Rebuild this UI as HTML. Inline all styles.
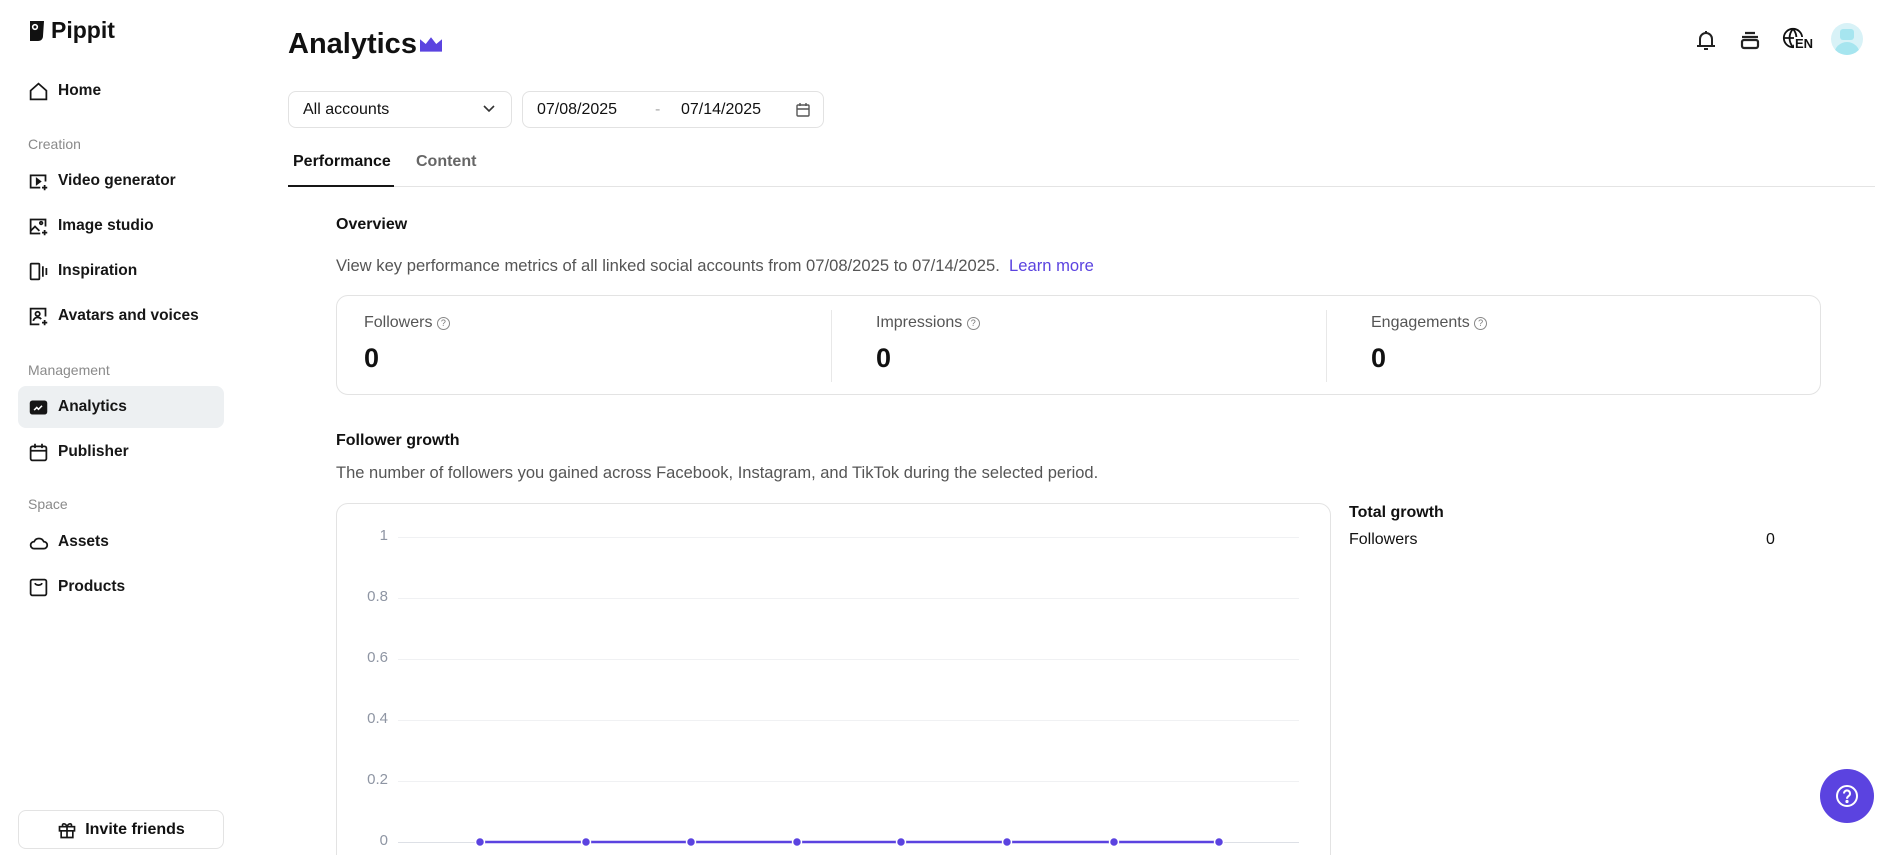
<!DOCTYPE html>
<html><head><meta charset="utf-8"><style>
*{margin:0;padding:0;box-sizing:border-box}
html,body{width:1902px;height:855px;overflow:hidden}
body{background:#fff;font-family:"Liberation Sans",Arial,sans-serif;color:#111}
#w{position:relative;width:1902px;height:855px;overflow:hidden}
.a{position:absolute;white-space:nowrap}
.nav{position:absolute;left:28px;height:24px;line-height:24px;font-size:15.5px;font-weight:bold;color:#161616;display:flex;align-items:center}
.nav svg{width:21px;height:21px;margin-right:9px}
.sec{position:absolute;left:28px;font-size:14px;color:#8a8a8a;line-height:16px}
.lbl{font-size:16px;color:#555}
.val{font-size:27px;font-weight:bold}
.yl{position:absolute;width:60px;text-align:right;left:328px;font-size:15px;color:#8e95a3;line-height:16px}
.gl{position:absolute;left:398px;width:901px;height:1px;background:#f0f1f3}
.q{border:1px solid #888;border-radius:50%;display:inline-block;width:13px;height:13px;line-height:11px;text-align:center;font-size:9px;color:#777;vertical-align:1px}
</style></head><body><div id="w">
<!-- sidebar -->
<div class="a" style="left:28px;top:17px;display:flex;align-items:center">
<svg width="18" height="24" viewBox="0 0 18 22"><path d="M2 1h14l-1 15c0 3-2 5-5 5H2z" fill="#111"/><circle cx="7" cy="7" r="2.3" fill="none" stroke="#fff" stroke-width="1.6"/></svg>
<span style="font-size:23px;font-weight:bold;margin-left:5px">Pippit</span></div>

<div class="nav" style="top:79px"><svg viewBox="0 0 24 24" fill="none" stroke="#161616" stroke-width="2"><path d="M3 11l9-8 9 8v10H3z"/></svg>Home</div>
<div class="sec" style="top:136px">Creation</div>
<div class="nav" style="top:169px"><svg viewBox="0 0 24 24" fill="none" stroke="#161616" stroke-width="2"><path d="M20 12V5H3v14h11"/><path d="M10 9l4 3-4 3z" fill="#161616"/><path d="M19 16v6M16 19h6"/></svg>Video generator</div>
<div class="nav" style="top:214px"><svg viewBox="0 0 24 24" fill="none" stroke="#161616" stroke-width="2"><path d="M20 12V4H3v16h11"/><path d="M3 17l5-5 5 5"/><circle cx="15" cy="8" r="1.5"/><path d="M19 16v6M16 19h6"/></svg>Image studio</div>
<div class="nav" style="top:259px"><svg viewBox="0 0 24 24" fill="none" stroke="#161616" stroke-width="2"><rect x="3" y="3" width="10" height="18" rx="1"/><path d="M17 6v12M21 8v8"/></svg>Inspiration</div>
<div class="nav" style="top:304px"><svg viewBox="0 0 24 24" fill="none" stroke="#161616" stroke-width="2"><path d="M20 12V3H3v18h10"/><circle cx="11" cy="9" r="2.5"/><path d="M6 17c1-3 3-4 5-4s3 .5 4 2"/><path d="M19 16v6M16 19h6"/></svg>Avatars and voices</div>
<div class="sec" style="top:362px">Management</div>
<div class="a" style="left:18px;top:386px;width:206px;height:42px;background:#edf0f2;border-radius:8px"></div>
<div class="nav" style="top:395px"><svg viewBox="0 0 24 24"><rect x="2" y="4" width="20" height="16" rx="3" fill="#161616"/><path d="M7 15l3-3 2 2 4-4" stroke="#fff" stroke-width="1.8" fill="none"/></svg>Analytics</div>
<div class="nav" style="top:440px"><svg viewBox="0 0 24 24" fill="none" stroke="#161616" stroke-width="2"><rect x="3" y="5" width="18" height="16" rx="2"/><path d="M3 10h18M8 2v5M16 2v5"/></svg>Publisher</div>
<div class="sec" style="top:496px">Space</div>
<div class="nav" style="top:530px"><svg viewBox="0 0 24 24" fill="none" stroke="#161616" stroke-width="2"><path d="M7 19h11a4 4 0 000-8 6 6 0 00-11 0 4 4 0 000 8z"/></svg>Assets</div>
<div class="nav" style="top:575px"><svg viewBox="0 0 24 24" fill="none" stroke="#161616" stroke-width="2"><rect x="3" y="3" width="18" height="18" rx="2"/><path d="M8 7c1 3 7 3 8 0"/></svg>Products</div>
<div class="a" style="left:18px;top:810px;width:206px;height:39px;border:1px solid #e3e3e3;border-radius:8px;display:flex;align-items:center;justify-content:center;font-size:16px;font-weight:bold">
<svg width="20" height="20" viewBox="0 0 24 24" fill="none" stroke="#161616" stroke-width="2" style="margin-right:8px"><rect x="3" y="8" width="18" height="5"/><path d="M5 13v8h14v-8M12 8v13M12 8c-2-5-7-4-5 0M12 8c2-5 7-4 5 0"/></svg>Invite friends</div>

<!-- header -->
<div class="a" style="left:288px;top:26px;font-size:29px;font-weight:bold;line-height:36px">Analytics</div>
<svg class="a" style="left:420px;top:36px" width="22" height="16" viewBox="0 0 23 16"><path d="M0 3l6 5 5.5-7 5.5 7 6-5v13H0z" fill="#5b43e0"/></svg>

<svg class="a" style="left:1694px;top:28px" width="24" height="24" viewBox="0 0 24 24" fill="none" stroke="#222" stroke-width="2"><path d="M6 18V11a6 6 0 0112 0v7M3 18h18M10 21h4M12 3v2"/></svg>
<svg class="a" style="left:1738px;top:28px" width="24" height="24" viewBox="0 0 24 24" fill="none" stroke="#222" stroke-width="2.2"><path d="M7 5h10M4 9h16"/><rect x="4" y="12" width="16" height="8" rx="2"/></svg>
<svg class="a" style="left:1782px;top:27px" width="22" height="22" viewBox="0 0 24 24" fill="none" stroke="#111" stroke-width="2"><circle cx="12" cy="12" r="10"/><path d="M2 12h20M12 2c-5 6-5 14 0 20M12 2c5 6 5 14 0 20"/></svg>
<div class="a" style="left:1794px;top:37px;font-size:13px;font-weight:bold;background:#fff;padding:0 1px;line-height:14px">EN</div>
<div class="a" style="left:1831px;top:23px;width:32px;height:32px;border-radius:50%;background:#d8f2f7;overflow:hidden">
<div class="a" style="left:9px;top:6px;width:14px;height:11px;border-radius:3px;background:#a6e5ef"></div>
<div class="a" style="left:3px;top:19px;width:26px;height:20px;border-radius:13px 13px 0 0;background:#a6e5ef"></div></div>

<!-- filters -->
<div class="a" style="left:288px;top:91px;width:224px;height:37px;border:1px solid #e2e2e2;border-radius:8px;font-size:16px;line-height:35px;padding-left:14px">All accounts
<svg class="a" style="left:193px;top:12px" width="14" height="10" viewBox="0 0 14 10" fill="none" stroke="#333" stroke-width="1.6"><path d="M2 2l5 5 5-5"/></svg></div>
<div class="a" style="left:522px;top:91px;width:302px;height:37px;border:1px solid #e2e2e2;border-radius:8px;font-size:16px;line-height:35px">
<span class="a" style="left:14px">07/08/2025</span><span class="a" style="left:132px;color:#aaa">-</span><span class="a" style="left:158px">07/14/2025</span>
<svg class="a" style="left:272px;top:10px" width="16" height="16" viewBox="0 0 16 16" fill="none" stroke="#555" stroke-width="1.4"><rect x="2" y="3" width="12" height="11" rx="1"/><path d="M2 7h12M5 1v3M11 1v3"/></svg></div>

<div class="a" style="left:293px;top:153px;font-size:16px;font-weight:bold;color:#111">Performance</div>
<div class="a" style="left:416px;top:153px;font-size:16px;font-weight:bold;color:#666">Content</div>
<div class="a" style="left:288px;top:186px;width:1587px;height:1px;background:#e4e4e4"></div>
<div class="a" style="left:288px;top:185px;width:106px;height:2px;background:#161616"></div>

<!-- overview -->
<div class="a" style="left:336px;top:216px;font-size:16px;font-weight:bold">Overview</div>
<div class="a" style="left:336px;top:256px;font-size:16.6px;color:#555">View key performance metrics of all linked social accounts from 07/08/2025 to 07/14/2025.&nbsp; <span style="color:#5b43e0">Learn more</span></div>
<div class="a" style="left:336px;top:295px;width:1485px;height:100px;border:1px solid #e3e3e3;border-radius:12px"></div>
<div class="a" style="left:831px;top:310px;width:1px;height:72px;background:#e8e8e8"></div>
<div class="a" style="left:1326px;top:310px;width:1px;height:72px;background:#e8e8e8"></div>
<div class="a lbl" style="left:364px;top:314px">Followers <span class="q">?</span></div>
<div class="a val" style="left:364px;top:343px">0</div>
<div class="a lbl" style="left:876px;top:314px">Impressions <span class="q">?</span></div>
<div class="a val" style="left:876px;top:343px">0</div>
<div class="a lbl" style="left:1371px;top:314px">Engagements <span class="q">?</span></div>
<div class="a val" style="left:1371px;top:343px">0</div>

<!-- follower growth -->
<div class="a" style="left:336px;top:432px;font-size:16px;font-weight:bold">Follower growth</div>
<div class="a" style="left:336px;top:464px;font-size:16.5px;color:#555">The number of followers you gained across Facebook, Instagram, and TikTok during the selected period.</div>
<div class="a" style="left:336px;top:503px;width:995px;height:400px;border:1px solid #e3e3e3;border-radius:12px"></div>
<div class="yl" style="top:528px">1</div><div class="gl" style="top:537px"></div>
<div class="yl" style="top:589px">0.8</div><div class="gl" style="top:598px"></div>
<div class="yl" style="top:650px">0.6</div><div class="gl" style="top:659px"></div>
<div class="yl" style="top:711px">0.4</div><div class="gl" style="top:720px"></div>
<div class="yl" style="top:772px">0.2</div><div class="gl" style="top:781px"></div>
<div class="yl" style="top:833px">0</div><div class="gl" style="top:842px;background:#dde0e6"></div>
<svg class="a" style="left:0;top:0" width="1902" height="855"><path d="M480 842H1219" stroke="#5b43e0" stroke-width="2.5"/>
<g fill="#5b43e0" stroke="#fff" stroke-width="1.5"><circle cx="480" cy="842" r="4.5"/><circle cx="586" cy="842" r="4.5"/><circle cx="691" cy="842" r="4.5"/><circle cx="797" cy="842" r="4.5"/><circle cx="901" cy="842" r="4.5"/><circle cx="1007" cy="842" r="4.5"/><circle cx="1114" cy="842" r="4.5"/><circle cx="1219" cy="842" r="4.5"/></g></svg>

<div class="a" style="left:1349px;top:504px;font-size:16px;font-weight:bold">Total growth</div>
<div class="a" style="left:1349px;top:531px;font-size:16px">Followers</div>
<div class="a" style="left:1766px;top:531px;font-size:16px">0</div>

<div class="a" style="left:1820px;top:769px;width:54px;height:54px;border-radius:50%;background:#5b43e0"></div>
<svg class="a" style="left:1834px;top:783px" width="26" height="26" viewBox="0 0 26 26" fill="none" stroke="#fff" stroke-width="2"><circle cx="13" cy="13" r="10"/><path d="M10 10.5a3 3 0 115 2.2c-1.2.9-2 1.4-2 3"/><circle cx="13" cy="18.5" r=".6" fill="#fff"/></svg>
</div></body></html>
